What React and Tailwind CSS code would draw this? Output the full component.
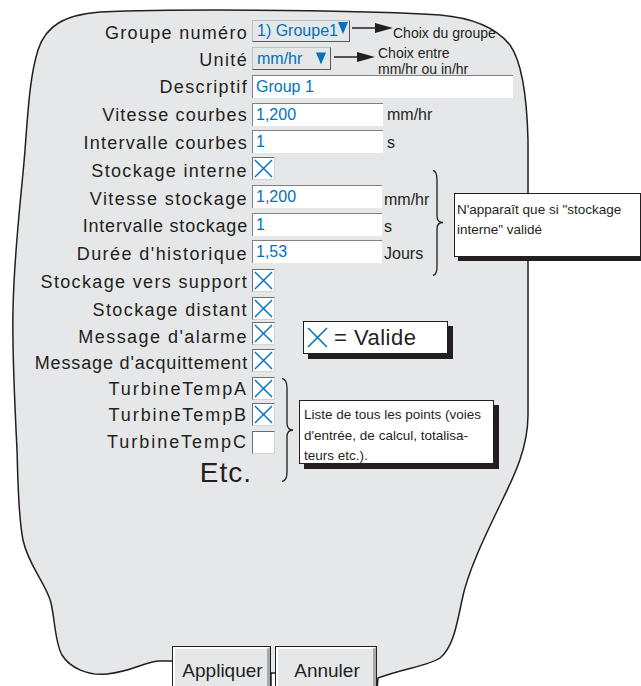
import React from 'react';

const INK = '#231f20';

const Cross = ({ size = 'w-[19px] h-[19px]' }) => (
    <svg viewBox="0 0 20 20" className={`${size} shrink-0`}>
        <path d="M1 1L19 19M19 1L1 19" stroke="#0072bc" strokeWidth="1.5" fill="none" />
    </svg>
);

const Check = ({ on, shift = '' }) => (
    <div className={`w-[23px] h-[23px] shrink-0 bg-white border-t-[1.5px] border-l-[1.5px] border-r border-b border-t-[#6d6e71] border-l-[#6d6e71] border-r-[#d1d3d4] border-b-[#d1d3d4] flex items-center justify-center ${shift}`}>
        {on && <Cross />}
    </div>
);

const Field = ({ value, w = 'w-[131px]', shift = '' }) => (
    <div className={`${w} h-[23px] shrink-0 bg-white border-t-[1.5px] border-l-[1.5px] border-[#808285] pl-[3px] flex items-center text-[16px] text-[#0072bc] whitespace-nowrap ${shift}`}>
        {value}
    </div>
);

const Down = ({ cls }) => (
    <svg viewBox="0 0 10 12" className={`w-[10px] h-[12px] shrink-0 ${cls}`}>
        <polygon points="0,0 10,0 5,12" fill="#0072bc" />
    </svg>
);

const Arrow = ({ cls }) => (
    <svg viewBox="0 0 41 12" className={`w-[41px] h-[12px] shrink-0 ${cls}`}>
        <line x1="0" y1="6" x2="25" y2="6" stroke={INK} strokeWidth="1.5" />
        <polygon points="23,1 41,6 23,11" fill={INK} />
    </svg>
);

const Brace = ({ cls, h, d }) => (
    <svg viewBox={`0 0 14 ${h}`} className={`w-[14px] shrink-0 ${cls}`}>
        <path d={d} stroke={INK} strokeWidth="1.3" fill="none" />
    </svg>
);

// labels in the source are tracked unevenly, so each row can set its own spacing
const Row = ({ h, label, lcls = 'tracking-[1.35px]', children }) => (
    <div className={`flex items-center ${h}`}>
        <div className={`w-[248px] shrink-0 text-right whitespace-nowrap text-[18px] ${lcls}`}>{label}</div>
        <div className="ml-[4px] flex items-center">{children}</div>
    </div>
);

const Btn = ({ w, children }) => (
    <div className={`${w} h-[50px] border border-[#231f20] bg-[#e6e7e8]`}>
        <div className="h-full border-t-2 border-l-2 border-white border-r-[3px] border-r-[#a7a9ac] flex justify-center pt-[8px] pl-[3px] text-[19px]">
            {children}
        </div>
    </div>
);

export default function App() {
    return (
        <div className="relative w-[641px] h-[686px] overflow-hidden bg-white font-['Liberation_Sans',Arial,sans-serif] text-[#231f20]">
            {/* panel outline */}
            <svg className="absolute inset-0" width="641" height="686" viewBox="0 0 641 686">
                <path
                    d="M173,661 L160,661 C145,661 135,671 107,674 C88,676 70,668 62,655 C55,643 55,620 51,603 C47,585 28,565 23,540 C18,515 18,480 17,450 C15,410 12,350 13,310 C14,250 22,190 25,150 C28,110 30,75 38,50 C46,25 65,15 100,12 C200,8 380,11 440,15 C475,18 498,30 510,45 C522,62 527,100 528,140 L528,415 C528,450 512,480 500,505 C488,530 468,570 462,600 C456,630 452,648 440,658 C428,666 405,668 378,678 L377,690 L276,690 L276,673 L271,673 L271,690 L173,690 Z"
                    fill="#e6e7e8"
                    stroke={INK}
                    strokeWidth="1.5"
                />
            </svg>

            <div className="relative flex flex-col pt-[20px]">
                <Row h="h-[27px]" label="Groupe numéro" lcls="tracking-[1.3px]">
                    <div className="w-[98px] h-[22px] mb-[5px] shrink-0 flex items-center pl-[4px] border-t border-l border-[#bcbec0] border-r-[1.5px] border-b-[1.5px] border-r-[#58595b] border-b-[#58595b] text-[16px] text-[#0072bc] whitespace-nowrap">
                        1) Groupe1
                        <Down cls="self-start mt-[1px]" />
                    </div>
                    <Arrow cls="ml-[2px] mb-[11px]" />
                    <span className="text-[14px] whitespace-nowrap">Choix du groupe</span>
                </Row>
                <Row h="h-[27px]" label="Unité">
                    <div className="w-[79px] h-[23px] mb-[4px] shrink-0 flex items-center pl-[4px] border-t border-l border-[#bcbec0] border-r-[1.5px] border-b-[1.5px] border-r-[#58595b] border-b-[#58595b] text-[16px] text-[#0072bc]">
                        mm/hr
                        <Down cls="ml-auto mr-[4px] h-[13px]" />
                    </div>
                    <Arrow cls="ml-[3px] mb-[7px]" />
                    <div className="ml-[3px] text-[14px] leading-[16px] whitespace-nowrap">
                        Choix entre
                        <br />
                        mm/hr ou in/hr
                    </div>
                </Row>
                <Row h="h-[27px]" label="Descriptif">
                    <Field value="Group 1" w="w-[261px]" shift="mb-[2px]" />
                </Row>
                <Row h="h-[28px]" label="Vitesse courbes" lcls="tracking-[1.2px]">
                    <Field value="1,200" shift="mb-[1px]" />
                    <span className="ml-[4px] text-[16px]">mm/hr</span>
                </Row>
                <Row h="h-[28px]" label="Intervalle courbes" lcls="tracking-[1.25px]">
                    <Field value="1" shift="mb-[4px]" />
                    <span className="ml-[4px] text-[16px]">s</span>
                </Row>
                <Row h="h-[29px]" label="Stockage interne">
                    <Check on shift="mb-[6px]" />
                </Row>

                {/* storage group with callout */}
                <div className="flex">
                    <div className="w-[430px] shrink-0 flex flex-col">
                        <Row h="h-[27px]" label="Vitesse stockage" lcls="tracking-[1.4px]">
                            <Field value="1,200" w="w-[130px]" shift="mb-[6px]" />
                            <span className="ml-[2px] text-[16px]">mm/hr</span>
                        </Row>
                        <Row h="h-[27px]" label="Intervalle stockage" lcls="tracking-[0.8px]">
                            <Field value="1" w="w-[130px]" shift="mb-[5px]" />
                            <span className="ml-[2px] text-[16px]">s</span>
                        </Row>
                        <Row h="h-[28px]" label="Durée d'historique" lcls="tracking-[1.43px]">
                            <Field value="1,53" w="w-[130px]" shift="mb-[5px]" />
                            <span className="ml-[2px] text-[16px]">Jours</span>
                        </Row>
                    </div>
                    <Brace
                        h={106}
                        cls="h-[106px] self-start -mt-[16px] -mb-[10px]"
                        d="M3,0.5 C6,1 7,4 7,10 L7,46 C7,50 9,52.5 13,52.5 C9,52.5 7,55 7,59 L7,96 C7,102 6,105 3,105.5"
                    />
                    <div className="ml-[10px] self-start mt-[7px] w-[187px] h-[64px] shrink-0 bg-white border border-[#231f20] shadow-[4px_4px_0_#231f20] pt-[6px] pl-[2px] text-[13.5px] leading-[20px] whitespace-nowrap">
                        N'apparaît que si "stockage
                        <br />
                        interne" validé
                    </div>
                </div>

                <Row h="h-[29px]" label="Stockage vers support">
                    <Check on shift="mb-[5px]" />
                </Row>
                <Row h="h-[27px]" label="Stockage distant" lcls="tracking-[1.4px]">
                    <Check on shift="mb-[4px]" />
                </Row>
                <Row h="h-[26px]" label="Message d'alarme" lcls="tracking-[1.45px]">
                    <Check on shift="mb-[8px]" />
                    <div className="ml-[28px] w-[145px] h-[33px] shrink-0 bg-white border-[1.5px] border-[#231f20] shadow-[5px_5px_0_#231f20] flex items-center pl-[3px]">
                        <Cross size="w-[21px] h-[21px]" />
                        <span className="ml-[6px] text-[22px] tracking-[0.5px] whitespace-nowrap">= Valide</span>
                    </div>
                </Row>
                <Row h="h-[26px]" label="Message d'acquittement" lcls="tracking-[0.85px]">
                    <Check on shift="mb-[6px]" />
                </Row>

                {/* points group with callout */}
                <div className="flex">
                    <div className="w-[280px] shrink-0 flex flex-col">
                        <Row h="h-[26px]" label="TurbineTempA" lcls="tracking-[1.92px]">
                            <Check on shift="mb-[2px]" />
                        </Row>
                        <Row h="h-[27px]" label="TurbineTempB" lcls="tracking-[1.92px]">
                            <Check on shift="mb-[2px]" />
                        </Row>
                        <Row h="h-[26px]" label="TurbineTempC" lcls="tracking-[1.97px]">
                            <Check />
                        </Row>
                        <div className="h-[36px] flex items-center">
                            <div className="w-[252px] shrink-0 text-right text-[28px] tracking-[1px]">Etc.</div>
                        </div>
                    </div>
                    <Brace
                        h={104}
                        cls="h-[104px] self-start mt-[2px]"
                        d="M2,0.5 C5,1 7,4 7,10 L7,45 C7,49 9,52 13,52 C9,52 7,55 7,59 L7,94 C7,100 5,103 2,103.5"
                    />
                    <div className="ml-[5px] self-start mt-[24px] w-[195px] h-[64px] shrink-0 bg-white border border-[#231f20] shadow-[5px_5px_0_#231f20] pt-[4px] pl-[4px] text-[13.5px] leading-[20.5px] whitespace-nowrap">
                        Liste de tous les points (voies
                        <br />
                        d'entrée, de calcul, totalisa-
                        <br />
                        teurs etc.).
                    </div>
                </div>

                <div className="mt-[155px] flex gap-[4px] pl-[172px]">
                    <Btn w="w-[99px]">Appliquer</Btn>
                    <Btn w="w-[102px]">Annuler</Btn>
                </div>
            </div>
        </div>
    );
}
